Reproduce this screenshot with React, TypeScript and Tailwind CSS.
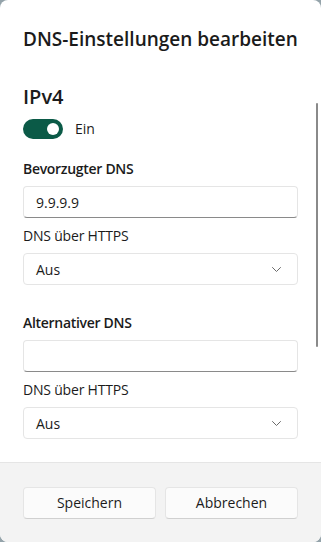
function Field({ label, value }: { label: string; value: string }) {
  return (
    <div>
      <div className="text-[14px] font-semibold leading-5 mb-[7px] tracking-[-0.3px]">{label}</div>
      <div className="h-[32px] rounded-[4px] border border-[#e5e5e5] border-b-[#8a8a8a] bg-white px-3 flex items-center text-[14px]">
        {value}
      </div>
    </div>
  );
}

function Select() {
  return (
    <div>
      <div className="text-[14px] leading-5 mb-[7px] tracking-[-0.2px]">DNS über HTTPS</div>
      <div className="h-[32px] rounded-[4px] border border-[#e5e5e5] bg-white pl-3 pr-[16px] flex items-center justify-between text-[14px]">
        <span>Aus</span>
        <svg width="9" height="5" viewBox="0 0 9 5" fill="none">
          <path d="M0.5 0.5l4 4 4-4" stroke="#6a6a6a" strokeWidth="1" strokeLinecap="round" strokeLinejoin="round" />
        </svg>
      </div>
    </div>
  );
}

export default function App() {
  return (
    <div className="w-[321px] h-[542px] bg-[#94a3aa]" style={{ fontFamily: '"Open Sans", "Noto Sans", sans-serif' }}>
      <div className="h-full rounded-[8px] bg-white text-[#1b1b1b] flex flex-col overflow-hidden relative">
        <div className="flex-1 min-h-0 overflow-hidden px-[23px] pt-[25px]">
          <h1 className="text-[19px] font-semibold leading-7 whitespace-nowrap">DNS-Einstellungen bearbeiten</h1>
          <div className="mt-[30px] text-[20px] font-semibold leading-7">IPv4</div>
          <div className="mt-[7px] flex items-center gap-3">
            <div className="w-[40px] h-[20px] rounded-full bg-[#0b5a47] flex items-center justify-end pr-[4px]">
              <div className="w-[12px] h-[12px] rounded-full bg-white" />
            </div>
            <span className="text-[14px]">Ein</span>
          </div>
          <div className="mt-[20px] flex flex-col gap-[8px]">
            <Field label="Bevorzugter DNS" value="9.9.9.9" />
            <Select />
          </div>
          <div className="mt-[28px] flex flex-col gap-[8px]">
            <Field label="Alternativer DNS" value="" />
            <Select />
          </div>
        </div>
        <div className="absolute right-[3px] top-[103px] w-[2px] h-[244px] rounded-full bg-[#8a8a8a]" />
        <div className="shrink-0 h-[80px] bg-[#f3f3f3] border-t border-[#e5e5e5] px-[23px] flex items-center gap-[9px]">
          <button className="flex-1 h-[32px] rounded-[4px] bg-[#fbfbfb] border border-[#e5e5e5] border-b-[#d0d0d0] text-[14px]">Speichern</button>
          <button className="flex-1 h-[32px] rounded-[4px] bg-[#fbfbfb] border border-[#e5e5e5] border-b-[#d0d0d0] text-[14px]">Abbrechen</button>
        </div>
      </div>
    </div>
  );
}
